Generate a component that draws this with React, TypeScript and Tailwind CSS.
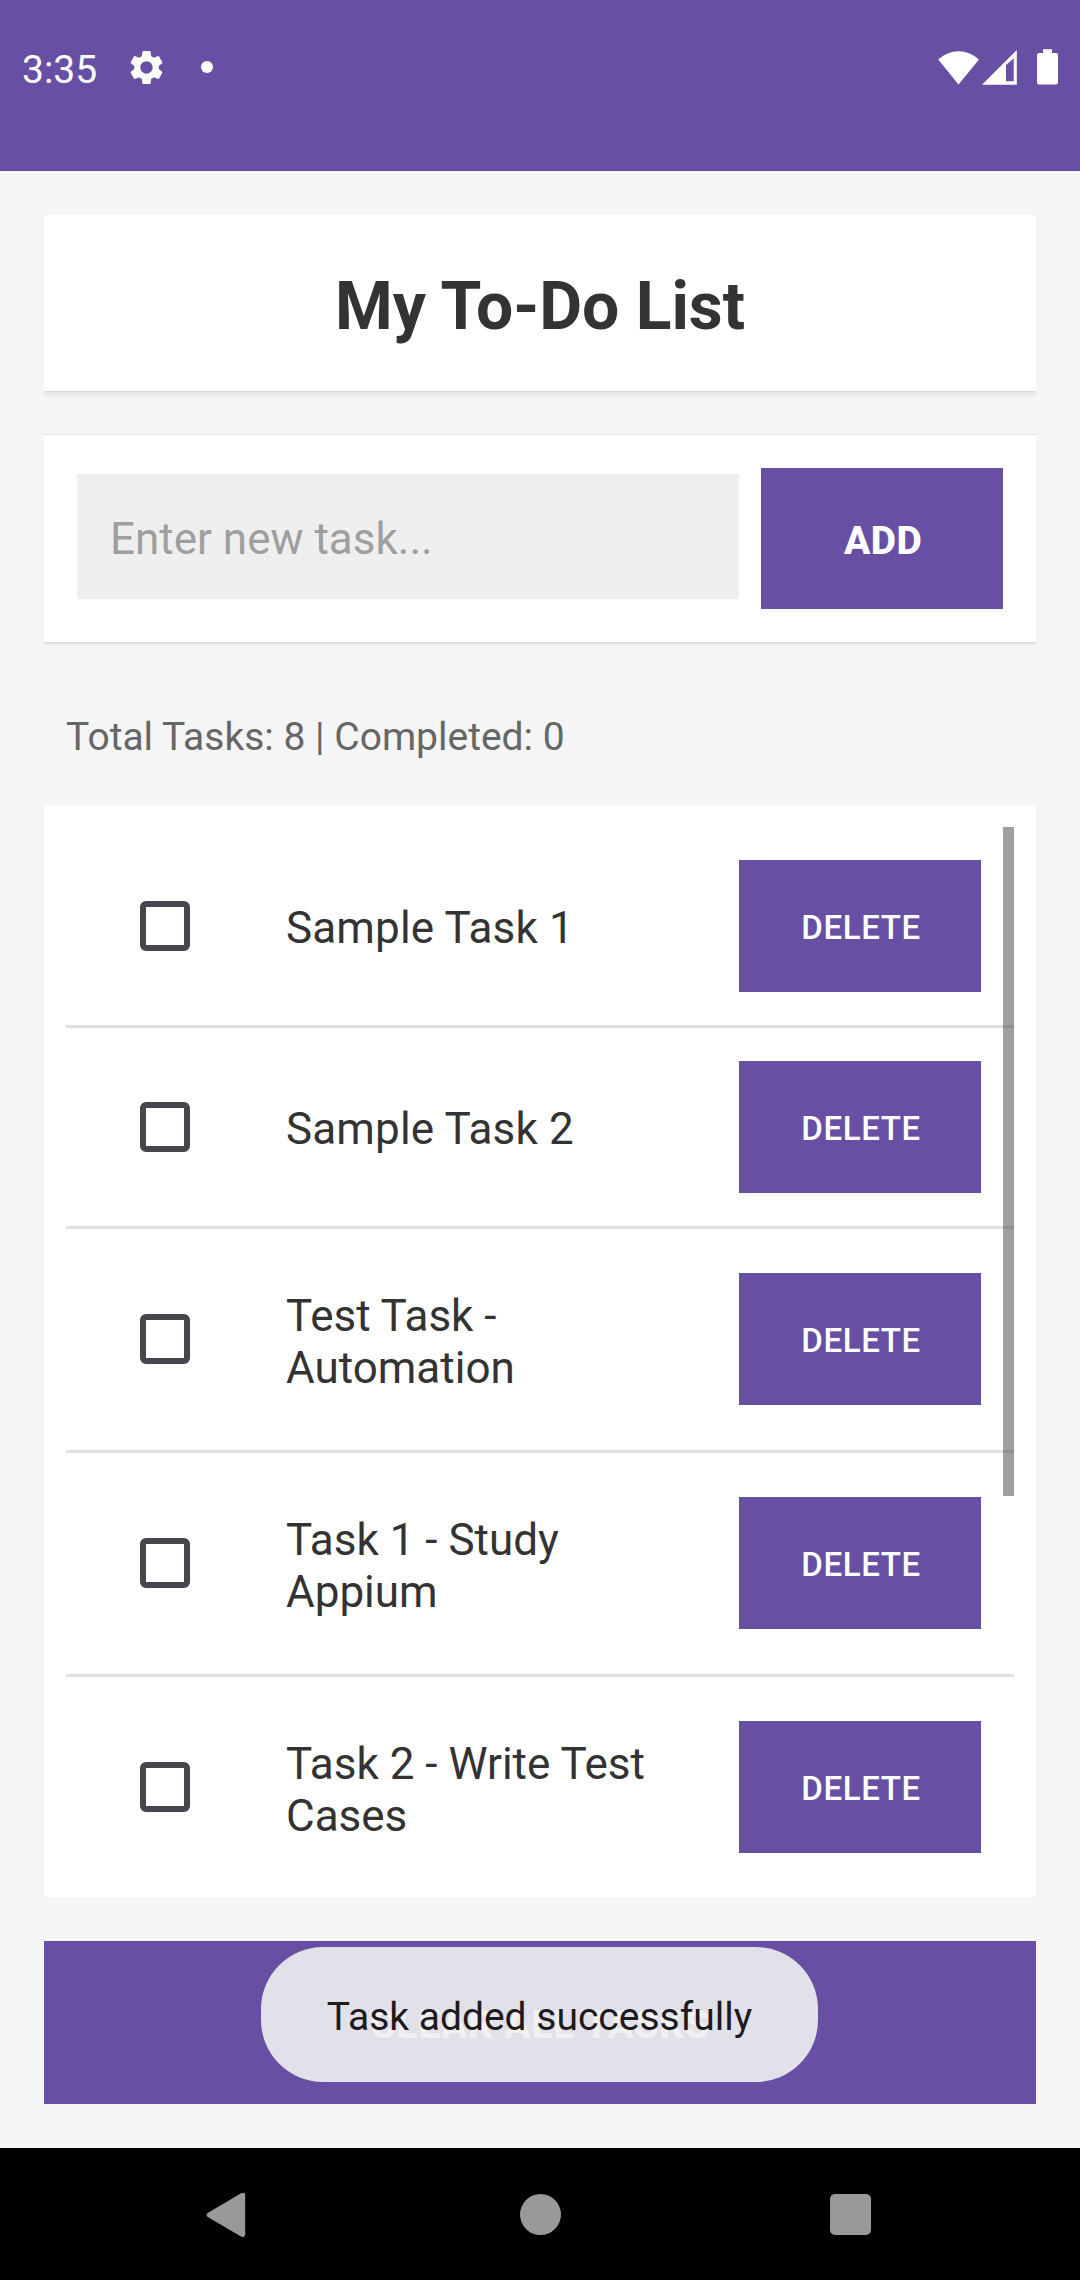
import { MdSettings } from "react-icons/md";

const tasks: { lines: string[] }[] = [
  { lines: ["Sample Task 1"] },
  { lines: ["Sample Task 2"] },
  { lines: ["Test Task -", "Automation"] },
  { lines: ["Task 1 - Study", "Appium"] },
  { lines: ["Task 2 - Write Test", "Cases"] },
];

function StatusBar() {
  return (
    <header className="flex h-[171px] shrink-0 items-start justify-between bg-[#6750a3] pt-[46px] pr-[22px] pl-[22px] text-white">
      <div className="flex h-[42px] items-center">
        <span className="w-[104px] pt-[6px] text-[39px] leading-[42px]">3:35</span>
        <MdSettings className="size-[41px]" />
        <span className="ml-[34px] size-[12px] rounded-full bg-white" />
      </div>
      <svg className="h-[42px] w-[122px]" viewBox="936 46 122 42" fill="white">
        <path d="M958.5 84.5 938.2 59.6A29 29 0 0 1 979 59.6Z" />
        <path
          fillRule="evenodd"
          d="M982 84.7 1016.8 50V84.7ZM1006 65V81.3H1013.7V58.6Z"
        />
        <path d="M1043 49.3h9V53h4a2 2 0 0 1 2 2v27.6a2 2 0 0 1-2 2h-17a2 2 0 0 1-2-2V55a2 2 0 0 1 2-2h4z" />
      </svg>
    </header>
  );
}

function TaskRow({ lines }: { lines: string[] }) {
  const wrapped = lines.length > 1;
  return (
    <li
      className={
        wrapped
          ? "flex h-[224px] items-start border-b-[3px] border-[#e0e0e0] px-[33px] pt-[44px] last:border-b-0"
          : "flex h-[201px] items-start border-b-[3px] border-[#e0e0e0] px-[33px] pt-[33px] last:border-b-0"
      }
    >
      <span className="flex h-[132px] w-[132px] shrink-0 items-center justify-center">
        <span className="size-[50px] rounded-[6px] border-[6px] border-[#49454f]" />
      </span>
      <p
        className={
          wrapped
            ? "flex h-[132px] flex-1 flex-col justify-center pt-[6px] pl-[55px] text-[44px] leading-[52px] text-[#333333]"
            : "flex h-[132px] flex-1 flex-col justify-center pt-[4px] pl-[55px] text-[44px] leading-[52px] tracking-[0.15px] text-[#333333]"
        }
      >
        {lines.map((line) => (
          <span key={line} className="whitespace-nowrap">
            {line}
          </span>
        ))}
      </p>
      <button className="h-[132px] w-[242px] shrink-0 bg-[#6750a3] pt-[3px] pl-[2px] text-[33px] font-medium tracking-[0.6px] text-white">
        DELETE
      </button>
    </li>
  );
}

function NavBar() {
  return (
    <nav className="flex h-[132px] shrink-0 items-center justify-between bg-black pt-[1px] pr-[209px] pl-[206px]">
      <svg className="h-[46px] w-[40px]" viewBox="0 0 40 46" fill="#999999">
        <path d="M1.7 21 35 1.2Q39 -0.5 39.2 3V42.6Q39 46 35 44.4L1.7 25Q-.6 23 1.7 21Z" />
      </svg>
      <span className="ml-[4px] size-[41px] rounded-full bg-[#999999]" />
      <span className="size-[41px] rounded-[5px] bg-[#999999]" />
    </nav>
  );
}

export default function App() {
  return (
    <div className="flex h-[2280px] w-[1080px] flex-col overflow-hidden bg-[#f5f5f5] font-['Roboto',sans-serif]">
      <StatusBar />
      <main className="flex flex-1 flex-col px-[44px] pt-[44px]">
        <h1 className="flex h-[176px] items-center justify-center bg-white text-[66px] leading-[78px] font-bold text-[#333333] shadow-[0_1px_0_#d8d8d8,0_2px_0_#e4e4e4,0_3px_0_#e8e8e8,0_4px_0_#ebebeb,0_5px_0_#eeeeee,0_6px_0_#f1f1f1,0_7px_0_#f3f3f3]">
          <span className="pt-[8px]">My To-Do List</span>
        </h1>

        <section className="mt-[44px] flex h-[207px] items-start gap-[22px] bg-white px-[33px] pt-[33px] shadow-[0_-1px_0_#e6e6e6,0_1px_0_#d6d6d6,0_2px_0_#e6e6e6,0_3px_0_#eeeeee,0_4px_0_#f3f3f3]">
          <div className="mt-[6px] h-[125px] flex-1 bg-[#efefef] px-[33px] text-[44px] leading-[130px] text-[#9f9f9f]">
            Enter new task...
          </div>
          <button className="h-[141px] w-[242px] bg-[#6750a3] pt-[6px] pl-[2px] text-[39px] font-extrabold tracking-[0.4px] text-white">
            ADD
          </button>
        </section>

        <p className="flex h-[163px] items-center px-[22px] pt-[27px] text-[39px] leading-[45px] text-[#666666]">
          Total Tasks: 8 | Completed: 0
        </p>

        <section className="relative h-[1092px] overflow-hidden bg-white p-[22px]">
          <ul>
            {tasks.map((task) => (
              <TaskRow key={task.lines[0]} lines={task.lines} />
            ))}
          </ul>
          <div className="absolute top-[22px] right-[22px] h-[669px] w-[11px] bg-[#49454f]/52" />
        </section>

        <div className="relative mt-[44px] flex h-[163px] items-center justify-center bg-[#6750a3]">
          <span className="pt-[6px] text-[39px] font-extrabold tracking-[0.7px] text-white">
            CLEAR ALL TASKS
          </span>
          <div className="absolute top-[6px] left-[217px] flex h-[135px] w-[557px] items-center justify-center rounded-[62px] bg-[#f0f0f0]/90 pt-[5px] text-[39px] text-[#1d1b1e]">
            Task added successfully
          </div>
        </div>
      </main>
      <NavBar />
    </div>
  );
}
